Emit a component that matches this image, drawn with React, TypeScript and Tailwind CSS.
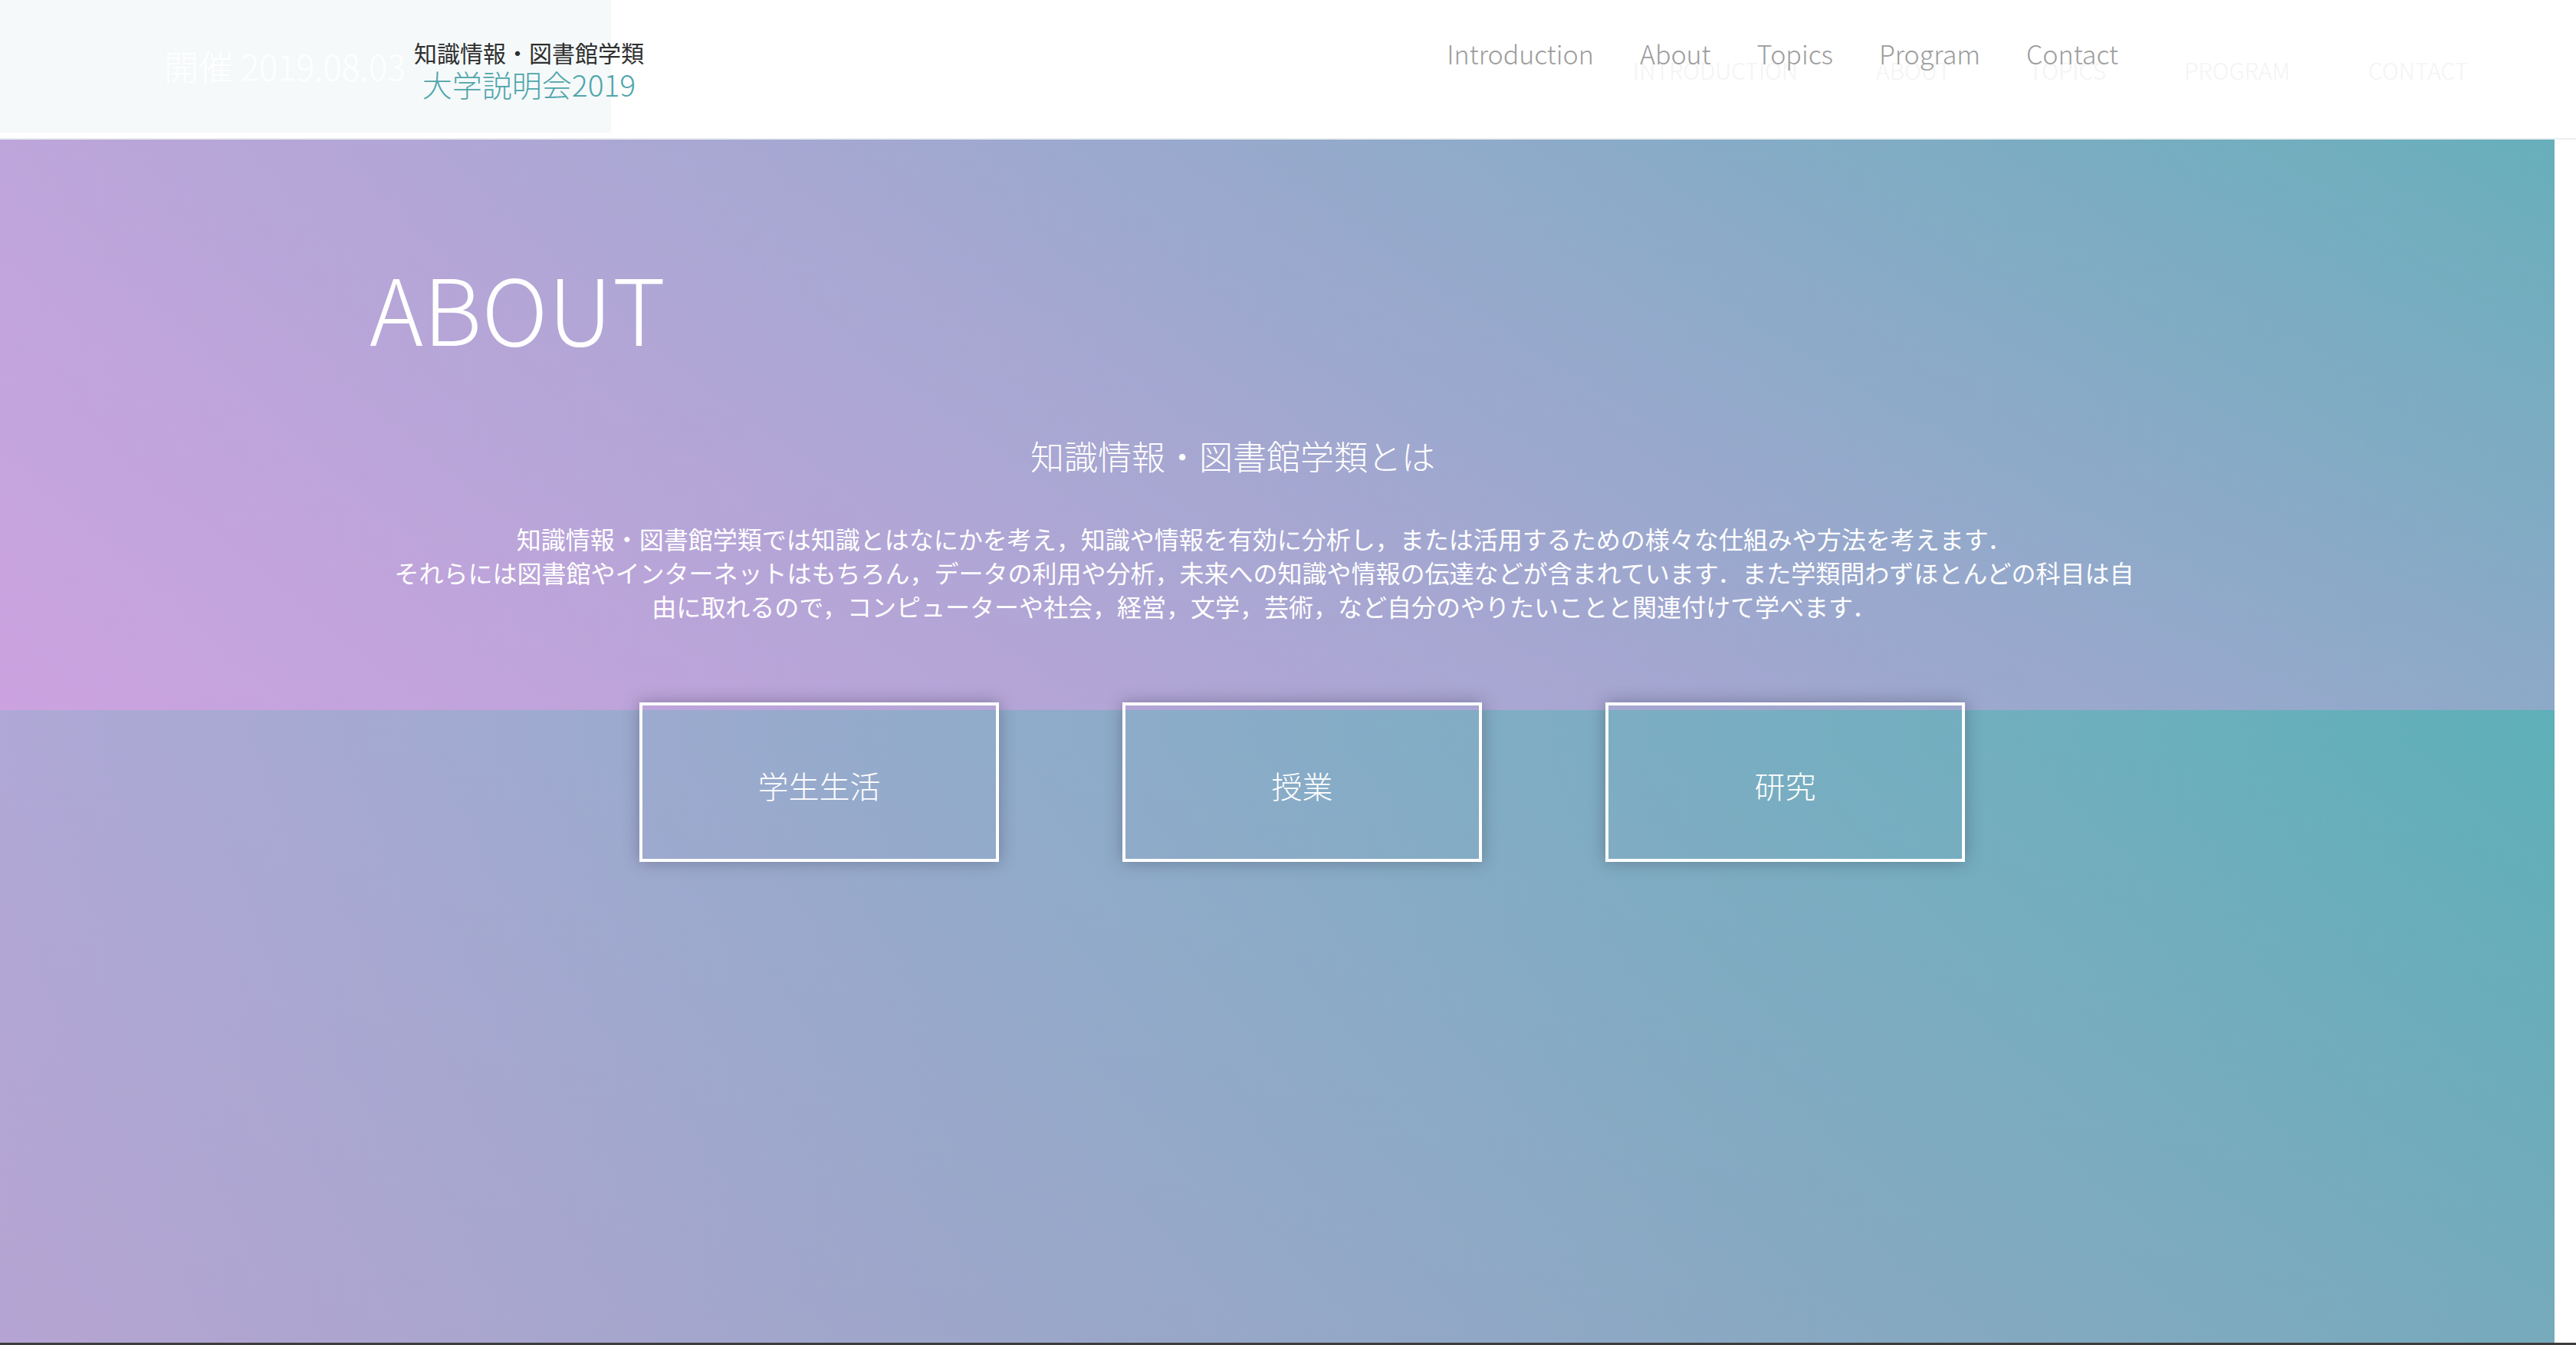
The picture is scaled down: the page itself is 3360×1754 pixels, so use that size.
const navItems = ["Introduction", "About", "Topics", "Program", "Contact"];
const ghostNav = ["INTRODUCTION", "ABOUT", "TOPICS", "PROGRAM", "CONTACT"];
const cards = ["学生生活", "授業", "研究"];

const App = () => {
  return (
    <div className="w-[3360px] h-[1754px] bg-white overflow-hidden font-['Noto_Sans_CJK_JP','Noto_Sans',sans-serif]">
      {/* Header */}
      <header className="relative h-[182px] border-b-2 border-[#eaeef0] flex items-start">
        <div className="absolute left-0 top-0 w-[797px] h-[173px] bg-[#f5f9fa]">
          <div className="absolute left-[214px] top-[63px] text-[45px] leading-none font-light text-white whitespace-nowrap">
            開催 2019.08.03
          </div>
        </div>
        <div className="absolute left-[2130px] top-[76px] flex gap-[102px] text-[30px] leading-none font-light text-[#f2f4f5]">
          {ghostNav.map((n) => (
            <span key={n}>{n}</span>
          ))}
        </div>

        {/* Logo */}
        <div className="relative ml-[540px] mt-[53px] flex flex-col items-center gap-[7px] whitespace-nowrap">
          <div className="text-[30px] leading-none text-[#2f2f2f]">知識情報・図書館学類</div>
          <div className="text-[39px] leading-none font-light text-[#4fa5ab]">大学説明会2019</div>
        </div>

        {/* Nav */}
        <nav className="relative ml-auto mr-[597px] mt-[53px] flex gap-[60px] text-[34px] leading-none font-light text-[#9c9c9c]">
          {navItems.map((n) => (
            <a key={n} href="#">
              {n}
            </a>
          ))}
        </nav>
      </header>

      {/* About */}
      <main className="w-[3332px] h-[1569px] text-white [background:linear-gradient(to_right,rgba(240,155,235,0.16),rgba(240,155,235,0))_0_0/100%_744px_no-repeat,linear-gradient(to_bottom,rgba(240,155,235,0.06),rgba(240,155,235,0.32))_0_0/100%_744px_no-repeat,linear-gradient(to_top,rgba(200,150,200,0.22)_0%,transparent_50%),linear-gradient(to_right,#b0a8d6,#5fb0b8)]">
        <div className="pt-[158px] pl-[482px]">
          <h1 className="text-[119px] leading-none font-extralight">ABOUT</h1>
        </div>

        <h2 className="mt-[113px] ml-[1344px] text-[44px] leading-none font-light whitespace-nowrap">
          知識情報・図書館学類とは
        </h2>

        <p className="mt-[64px] ml-[504px] w-[2290px] text-center text-[32px] leading-[44px] whitespace-nowrap">
          知識情報・図書館学類では知識とはなにかを考え，知識や情報を有効に分析し，または活用するための様々な仕組みや方法を考えます．
          <br />
          それらには図書館やインターネットはもちろん，データの利用や分析，未来への知識や情報の伝達などが含まれています．また学類問わずほとんどの科目は自
          <br />
          由に取れるので，コンピューターや社会，経営，文学，芸術，など自分のやりたいことと関連付けて学べます．
        </p>

        <div className="mt-[104px] ml-[834px] flex gap-[161px]">
          {cards.map((c) => (
            <button
              key={c}
              className="w-[469px] h-[208px] border-4 border-white flex items-center justify-center pt-[8px] text-[40px] font-light text-white shadow-[0_0_20px_rgba(40,40,60,0.35)]"
            >
              {c}
            </button>
          ))}
        </div>
      </main>
      <div className="h-[3px] bg-[#3c3c3c]"></div>
    </div>
  );
};

export default App;
